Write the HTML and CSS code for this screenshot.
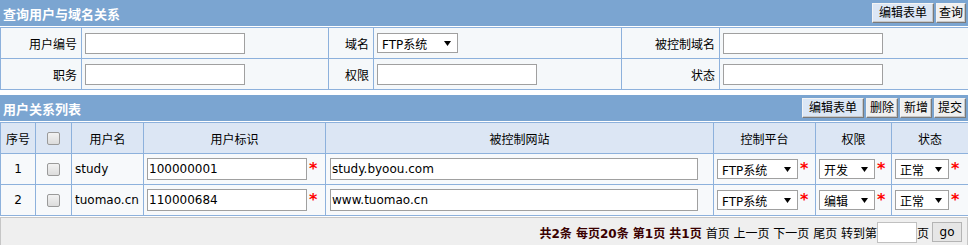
FILE: index.html
```html
<!DOCTYPE html>
<html lang="zh-CN">
<head>
<meta charset="utf-8">
<title>用户与域名关系</title>
<link rel="stylesheet" href="styles.css">
</head>
<body>
<div class="panel">
  <div class="bar">
    <span class="bar-title">查询用户与域名关系</span>
    <div class="tools tools-lg">
      <button class="btn btn-blue">编辑表单</button>
      <button class="btn btn-narrow">查询</button>
    </div>
  </div>
  <table class="query">
    <colgroup>
      <col class="q1"><col class="q2"><col class="q3"><col class="q4"><col class="q5"><col class="q6">
    </colgroup>
    <tr>
      <td class="label">用户编号</td>
      <td class="value"><input class="text" type="text"></td>
      <td class="label">域名</td>
      <td class="value"><span class="select sel-q"><span>FTP系统</span><svg class="arrow" width="7" height="5" viewBox="0 0 7 5"><path d="M0 0H7L3.5 5Z"/></svg></span></td>
      <td class="label">被控制域名</td>
      <td class="value"><input class="text" type="text"></td>
    </tr>
    <tr>
      <td class="label">职务</td>
      <td class="value"><input class="text" type="text"></td>
      <td class="label">权限</td>
      <td class="value"><input class="text" type="text"></td>
      <td class="label">状态</td>
      <td class="value"><input class="text" type="text"></td>
    </tr>
  </table>
</div>

<div class="panel panel-list">
  <div class="bar">
    <span class="bar-title">用户关系列表</span>
    <div class="tools">
      <button class="btn btn-blue">编辑表单</button>
      <button class="btn">删除</button>
      <button class="btn">新增</button>
      <button class="btn">提交</button>
    </div>
  </div>
  <table class="list">
    <colgroup>
      <col class="c1"><col class="c2"><col class="c3"><col class="c4"><col class="c5"><col class="c6"><col class="c7"><col class="c8">
    </colgroup>
    <tr>
      <th>序号</th>
      <th><span class="check"></span></th>
      <th>用户名</th>
      <th>用户标识</th>
      <th>被控制网站</th>
      <th>控制平台</th>
      <th>权限</th>
      <th>状态</th>
    </tr>
    <tr>
      <td class="center">1</td>
      <td class="center"><span class="check"></span></td>
      <td>study</td>
      <td><input class="text" type="text" value="100000001"><span class="req">*</span></td>
      <td><input class="text text-wide" type="text" value="study.byoou.com"></td>
      <td><span class="select sel-p"><span>FTP系统</span><svg class="arrow" width="7" height="5" viewBox="0 0 7 5"><path d="M0 0H7L3.5 5Z"/></svg></span><span class="req">*</span></td>
      <td><span class="select sel-r"><span>开发</span><svg class="arrow" width="7" height="5" viewBox="0 0 7 5"><path d="M0 0H7L3.5 5Z"/></svg></span><span class="req">*</span></td>
      <td><span class="select sel-s"><span>正常</span><svg class="arrow" width="7" height="5" viewBox="0 0 7 5"><path d="M0 0H7L3.5 5Z"/></svg></span><span class="req">*</span></td>
    </tr>
    <tr>
      <td class="center">2</td>
      <td class="center"><span class="check"></span></td>
      <td>tuomao.cn</td>
      <td><input class="text" type="text" value="110000684"><span class="req">*</span></td>
      <td><input class="text text-wide" type="text" value="www.tuomao.cn"></td>
      <td><span class="select sel-p"><span>FTP系统</span><svg class="arrow" width="7" height="5" viewBox="0 0 7 5"><path d="M0 0H7L3.5 5Z"/></svg></span><span class="req">*</span></td>
      <td><span class="select sel-r"><span>编辑</span><svg class="arrow" width="7" height="5" viewBox="0 0 7 5"><path d="M0 0H7L3.5 5Z"/></svg></span><span class="req">*</span></td>
      <td><span class="select sel-s"><span>正常</span><svg class="arrow" width="7" height="5" viewBox="0 0 7 5"><path d="M0 0H7L3.5 5Z"/></svg></span><span class="req">*</span></td>
    </tr>
  </table>
  <div class="pager">
    <b class="stat">共2条 每页20条 第1页 共1页</b>
    <span class="links">首页 上一页 下一页 尾页 转到第</span><input class="page-input" type="text"><span>页</span>
    <button class="btn btn-go">go</button>
  </div>
</div>
</body>
</html>
```

FILE: styles.css
```css
* { box-sizing: border-box; }

body {
  margin: 0;
  background: #fff;
  color: #000;
  font-family: "DejaVu Sans", "Noto Sans CJK SC", sans-serif;
  font-size: 12px;
}

.panel-list { margin-top: 5px; }

.bar {
  height: 26px;
  background: #7ba5d1;
  display: flex;
  align-items: center;
  justify-content: space-between;
  padding: 0 2px 0 3px;
  margin-bottom: 1px;
}

.bar-title {
  color: #fff;
  font-weight: bold;
  font-size: 13px;
  font-family: "Noto Sans CJK SC", sans-serif;
}

.tools { display: flex; gap: 2px; }

.btn {
  height: 20px;
  padding: 0 3px;
  margin: 0;
  font-family: "DejaVu Sans", "Noto Sans CJK SC", sans-serif;
  font-size: 12px;
  line-height: 18px;
  color: #000;
  background: #f0f0f0;
  border: 1px solid;
  border-color: #f4f4f4 #7a7a7a #7a7a7a #f4f4f4;
  box-shadow: inset -1px -1px 0 #c8c8c8;
}

.btn-narrow { padding: 0 2px; }

.btn-blue {
  background: #dce7f5;
  padding: 0 6px;
}

table {
  width: 100%;
  border-collapse: collapse;
  table-layout: fixed;
}

td, th {
  border: 1px solid #8db1dc;
  height: 31px;
  padding: 0 3px;
  font-weight: normal;
  white-space: nowrap;
  vertical-align: middle;
}

.query td { background: #f5f8fa; }
.query .label { text-align: right; padding-right: 4px; }

.q1 { width: 81px; }
.q2 { width: 247px; }
.q3 { width: 45px; }
.q4 { width: 248px; }
.q5 { width: 98px; }
.q6 { width: 249px; }

.c1 { width: 35px; }
.c2 { width: 36px; }
.c3 { width: 72px; }
.c4 { width: 182px; }
.c5 { width: 388px; }
.c6 { width: 102px; }
.c7 { width: 76px; }
.c8 { width: 77px; }

.list th {
  background: #dce6f4;
  text-align: center;
}
.list td { background: #f7f9fb; }
.list td.center { text-align: center; }
.list td:nth-child(5) { padding-left: 4px; }

.text {
  width: 160px;
  height: 22px;
  border: 1px solid #a0a0a0;
  background: #fff;
  padding: 0 1px;
  font-family: "DejaVu Sans", "Noto Sans CJK SC", sans-serif;
  font-size: 12px;
  color: #000;
  vertical-align: middle;
  margin: 0;
}
.query .text { height: 21px; }
.text-wide { width: 368px; }

.req {
  color: #ff0000;
  font-size: 16px;
  font-weight: bold;
  margin-left: 2px;
  vertical-align: middle;
  line-height: 1;
}

.select {
  display: inline-flex;
  align-items: center;
  justify-content: space-between;
  height: 20px;
  border: 1px solid #a0a0a0;
  background: #fff;
  padding: 0 6px 0 4px;
  vertical-align: middle;
}
.sel-q { width: 81px; }
.sel-p { width: 81px; }
.sel-r { width: 56px; }
.sel-s { width: 54px; }
.arrow { fill: #000; flex: none; }

.check {
  display: inline-block;
  width: 13px;
  height: 13px;
  border: 1px solid #9a9a9a;
  border-radius: 2px;
  background: linear-gradient(#f2f2f2, #dcdcdc);
  vertical-align: middle;
}

.pager {
  margin-top: 1px;
  height: 30px;
  background: #efefef;
  border: 1px solid #c6c6c6;
  display: flex;
  align-items: center;
  justify-content: flex-end;
  padding-right: 5px;
  white-space: pre;
}

.stat { color: #3a0000; margin-right: 4px; }

.page-input {
  width: 40px;
  height: 21px;
  border: 1px solid #c0c0c0;
  background: #fff;
  margin: 0;
}

.btn-go {
  width: 30px;
  margin-left: 3px;
  padding: 0;
  font-size: 12px;
  background: #e6e6e6;
  border-color: #b4b4b4;
  box-shadow: none;
}
```
